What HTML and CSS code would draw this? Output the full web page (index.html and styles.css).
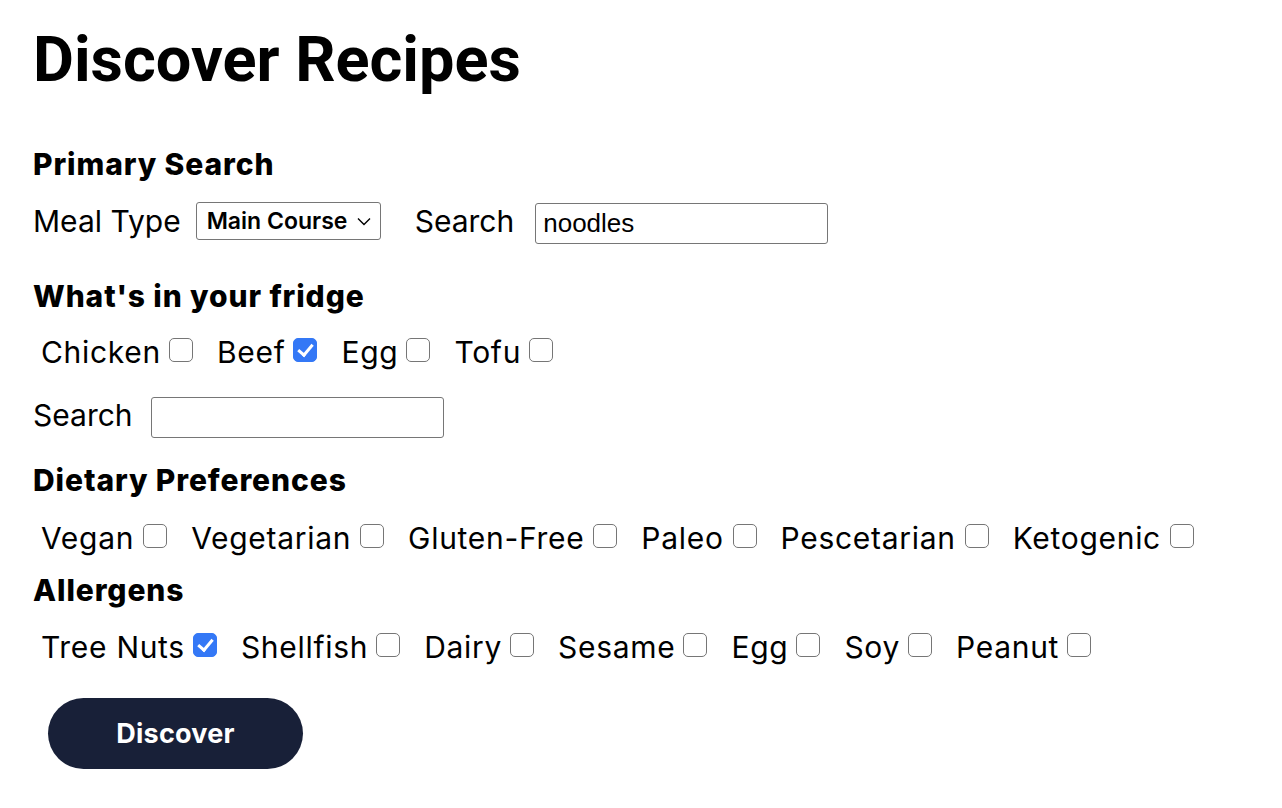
FILE: index.html
```html
<!DOCTYPE html>
<html>
<head>
<meta charset="utf-8">
<link rel="stylesheet" href="styles.css">
</head>
<body>
<main class="page">
  <h1 class="title">Discover Recipes</h1>

  <section class="group group-primary">
    <h3 class="group-title">Primary Search</h3>
    <div class="field-row field-row-primary">
      <label class="field-label" for="meal">Meal Type</label>
      <div class="select">
        <span class="select-value">Main Course</span>
        <svg class="select-arrow" width="14" height="9" viewBox="0 0 14 9"><path d="M1 1.5 L7 7.5 L13 1.5" fill="none" stroke="#000" stroke-width="1.4"/></svg>
      </div>
      <label class="field-label field-label-gap" for="q">Search</label>
      <input class="text-input text-input-primary" id="q" type="text" value="noodles">
    </div>
  </section>

  <section class="group group-fridge">
    <h3 class="group-title">What's in your fridge</h3>
    <div class="check-row check-row-fridge">
      <label class="check">Chicken<input type="checkbox"></label>
      <label class="check">Beef<input type="checkbox" checked></label>
      <label class="check">Egg<input type="checkbox"></label>
      <label class="check">Tofu<input type="checkbox"></label>
    </div>
    <div class="field-row field-row-search">
      <label class="field-label" for="fq">Search</label>
      <input class="text-input" id="fq" type="text">
    </div>
  </section>

  <section class="group group-diet">
    <h3 class="group-title">Dietary Preferences</h3>
    <div class="check-row check-row-diet">
      <label class="check">Vegan<input type="checkbox"></label>
      <label class="check">Vegetarian<input type="checkbox"></label>
      <label class="check">Gluten-Free<input type="checkbox"></label>
      <label class="check">Paleo<input type="checkbox"></label>
      <label class="check">Pescetarian<input type="checkbox"></label>
      <label class="check">Ketogenic<input type="checkbox"></label>
    </div>
  </section>

  <section class="group group-allergens">
    <h3 class="group-title">Allergens</h3>
    <div class="check-row check-row-allergens">
      <label class="check">Tree Nuts<input type="checkbox" checked></label>
      <label class="check">Shellfish<input type="checkbox"></label>
      <label class="check">Dairy<input type="checkbox"></label>
      <label class="check">Sesame<input type="checkbox"></label>
      <label class="check">Egg<input type="checkbox"></label>
      <label class="check">Soy<input type="checkbox"></label>
      <label class="check">Peanut<input type="checkbox"></label>
    </div>
  </section>

  <button class="discover" type="button">Discover</button>
</main>
</body>
</html>
```

FILE: styles.css
```css
* { box-sizing: border-box; }

html, body {
  margin: 0;
  padding: 0;
  background: #ffffff;
  color: #000000;
}

.page {
  padding: 22px 33px 0 33px;
  display: flex;
  flex-direction: column;
  align-items: flex-start;
  font-family: Inter, "Noto Sans", sans-serif;
}

.title {
  margin: 0;
  font-family: Roboto, Inter, sans-serif;
  font-weight: 700;
  font-size: 63px;
  line-height: 76px;
}

.group {
  display: flex;
  flex-direction: column;
  align-items: flex-start;
}

.group-primary { margin-top: 48px; }
.group-fridge { margin-top: 34px; }
.group-diet { margin-top: 24px; }
.group-allergens { margin-top: 16px; }

.group-title {
  margin: 0;
  font-family: Inter, sans-serif;
  font-weight: 800;
  font-size: 30px;
  line-height: 36px;
  letter-spacing: 0.9px;
}

.field-row {
  display: flex;
  align-items: flex-start;
}

.field-row-primary { margin-top: 20px; }
.field-row-search { margin-top: 26px; }

.field-label {
  font-size: 30px;
  line-height: 36px;
  font-weight: 400;
  margin-top: 1px;
}

.field-label-gap { margin-left: 34px; }

.select {
  margin-left: 15px;
  width: 185px;
  height: 38px;
  border: 1px solid #767676;
  border-radius: 3px;
  display: flex;
  align-items: center;
  justify-content: space-between;
  padding: 0 9px 0 10px;
}

.select-value {
  font-family: Inter, sans-serif;
  font-weight: 600;
  font-size: 23px;
}

.text-input {
  margin-top: 1px;
  margin-left: 18px;
  width: 293px;
  height: 41px;
  border: 1px solid #767676;
  border-radius: 3px;
  padding: 0 7px;
  font-family: "Liberation Sans", Arial, sans-serif;
  font-size: 26px;
  color: #000;
  background: #fff;
  outline: none;
}

.text-input-primary { margin-left: 21px; }

.check-row {
  display: flex;
  align-items: flex-start;
  padding-left: 8px;
}

.check-row-fridge { margin-top: 20px; }
.check-row-diet { margin-top: 22px; }
.check-row-allergens { margin-top: 21px; }

.check {
  display: flex;
  align-items: flex-start;
  font-size: 30px;
  line-height: 36px;
  letter-spacing: 0.7px;
  margin-right: 24px;
}

.check-row-diet .check input { margin-left: 9px; }

.check input {
  -webkit-appearance: none;
  appearance: none;
  width: 24px;
  height: 24px;
  margin: 4px 0 0 8px;
  border: 1.5px solid #767676;
  border-radius: 5px;
  background: #fff;
  position: relative;
  flex: none;
}

.check input:checked {
  background: #3478f6;
  border-color: #3478f6;
}

.check input:checked::after {
  content: "";
  position: absolute;
  left: 7px;
  top: 2px;
  width: 6px;
  height: 12px;
  border-right: 3.5px solid #fff;
  border-bottom: 3.5px solid #fff;
  transform: rotate(40deg);
}

.discover {
  margin-top: 33px;
  margin-left: 15px;
  width: 255px;
  height: 71px;
  border: none;
  border-radius: 36px;
  background: #182038;
  color: #ffffff;
  font-family: Inter, sans-serif;
  font-weight: 700;
  font-size: 27px;
  letter-spacing: 0.2px;
}
```
